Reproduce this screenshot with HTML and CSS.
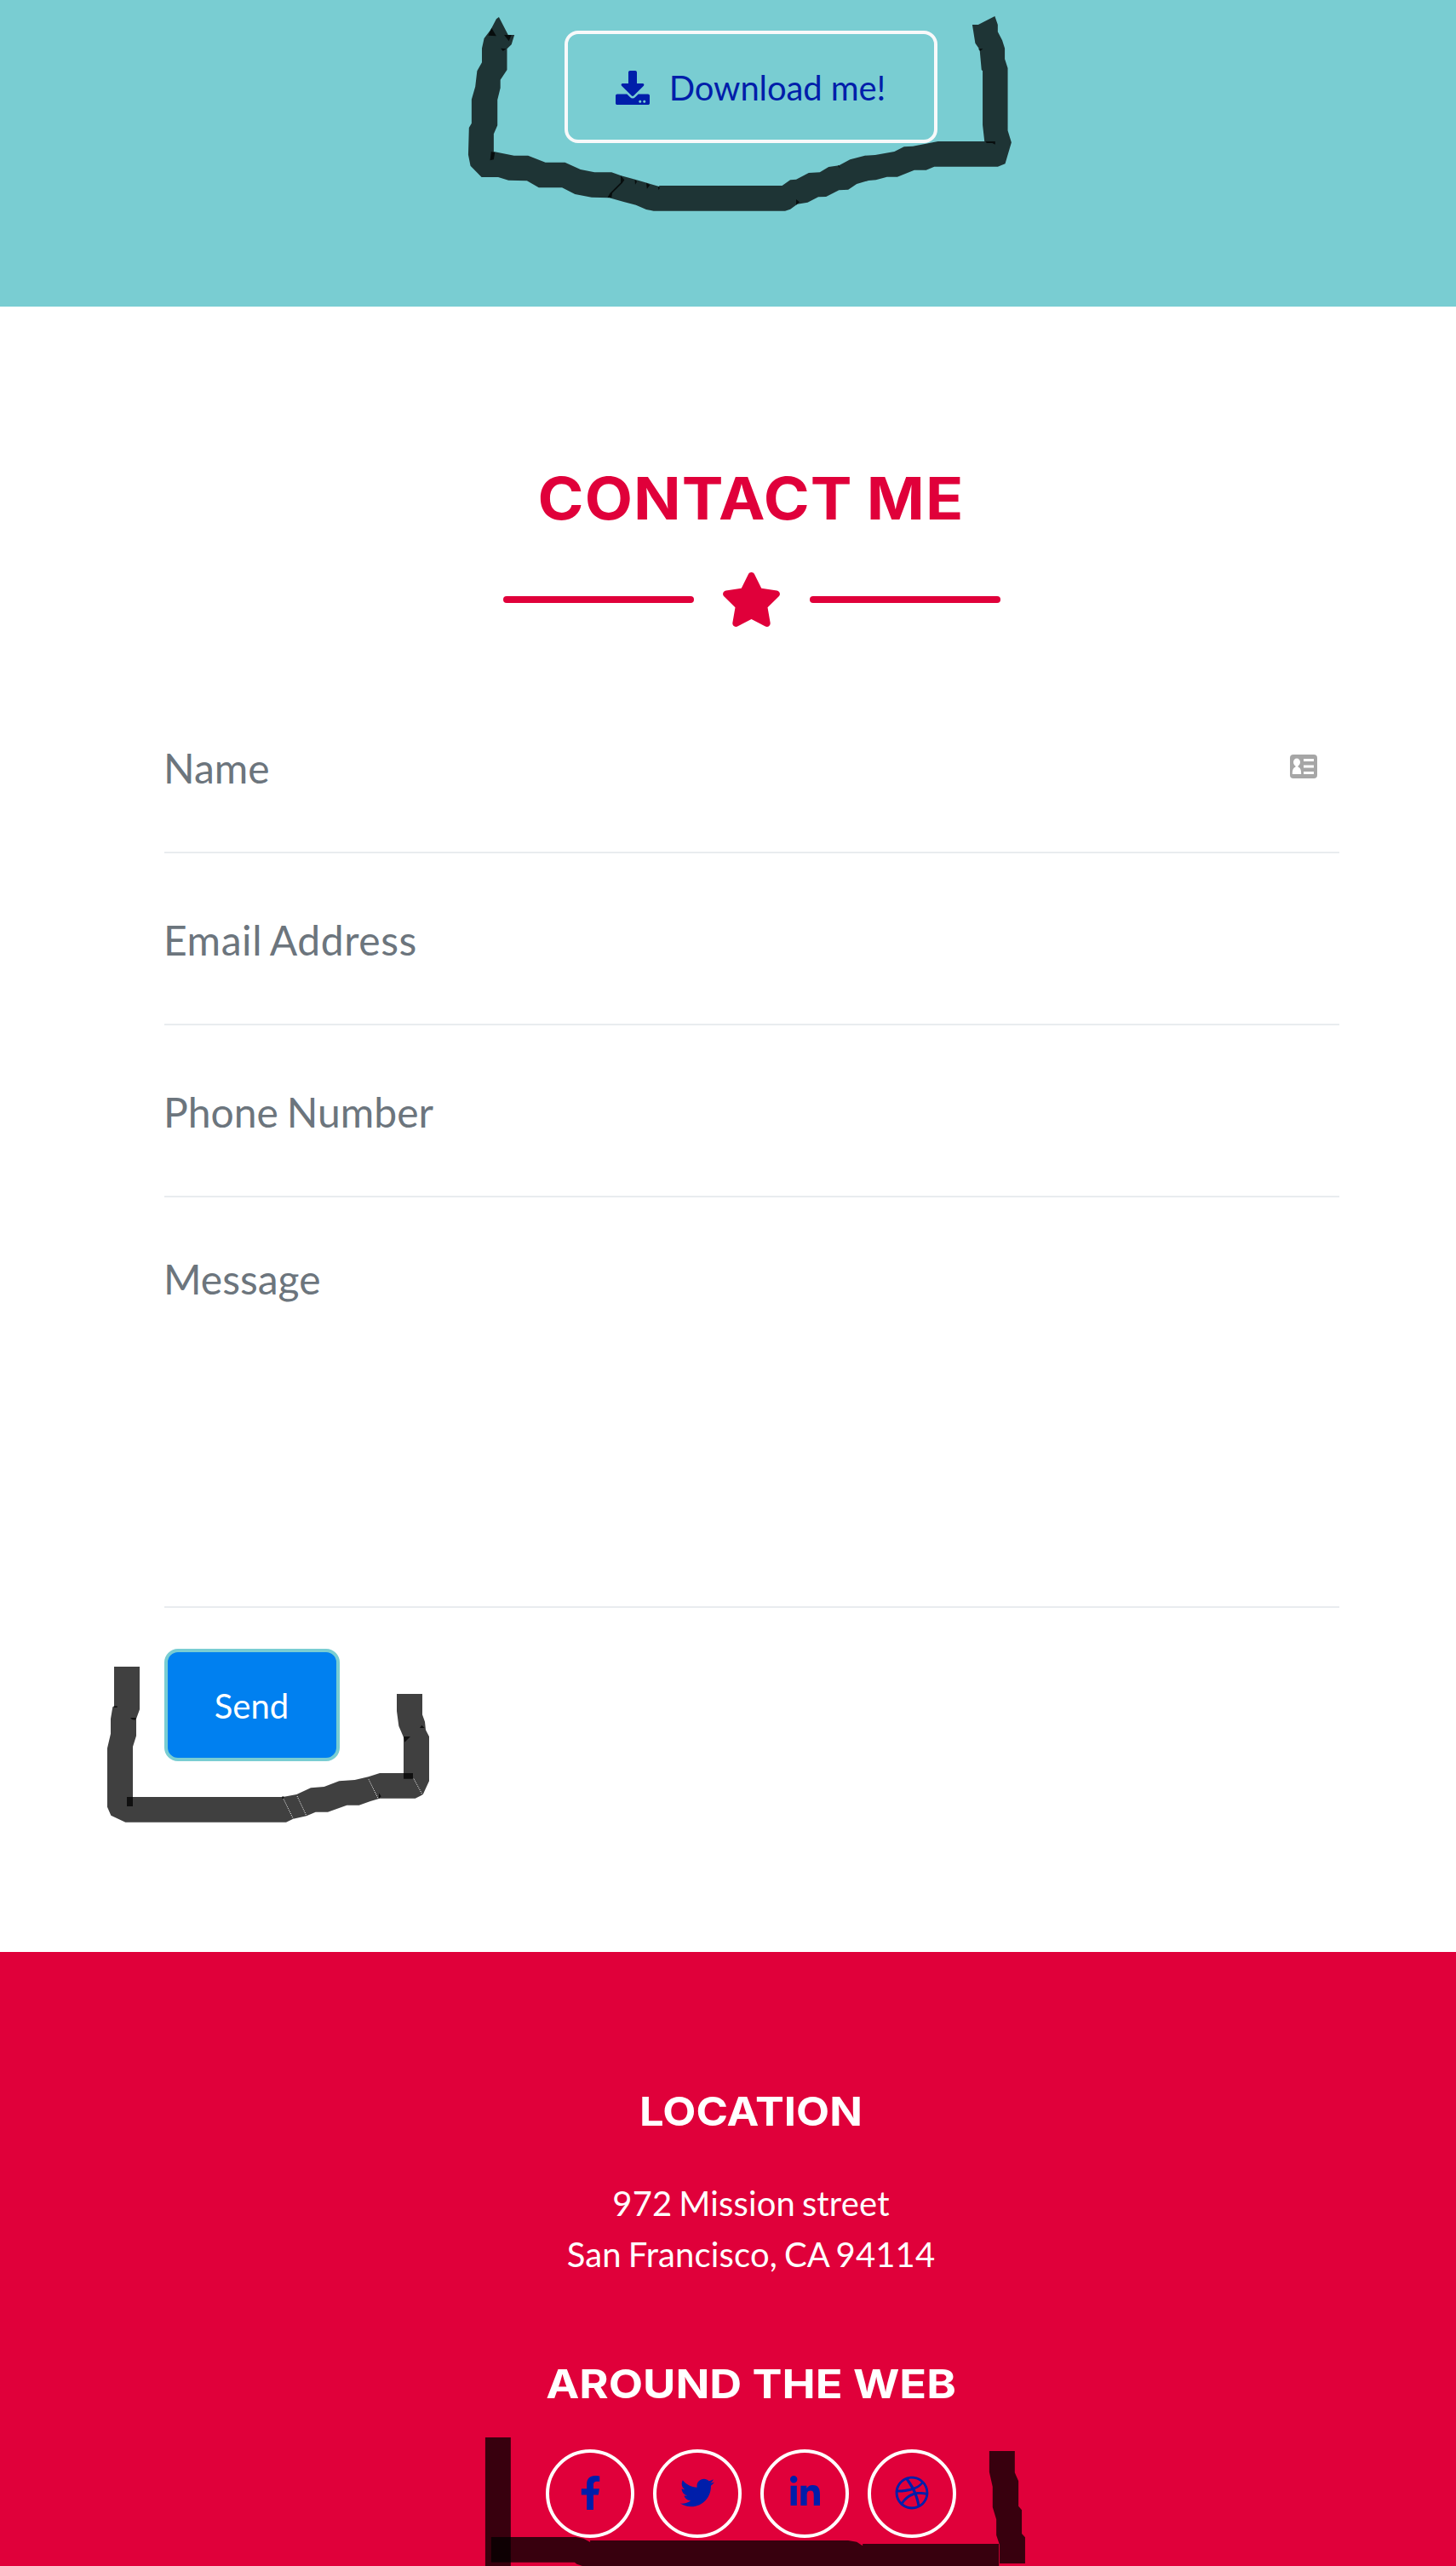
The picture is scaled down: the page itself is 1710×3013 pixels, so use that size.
FILE: index.html
```html
<!DOCTYPE html>
<html lang="en">
<head>
<meta charset="utf-8">
<title>Contact</title>
<link rel="stylesheet" href="styles.css">
</head>
<body>
<div class="page">
  <section class="about">
    <a class="btn btn-outline" href="#">
      <svg class="btn-icon" viewBox="0 0 512 512"><path fill="currentColor" d="M216 0h80c13.300 0 24 10.700 24 24v168h87.700c17.800 0 26.700 21.500 14.100 34.100L269.700 378.300c-7.500 7.500-19.800 7.500-27.300 0L90.100 226.100c-12.600-12.600-3.700-34.100 14.100-34.100H192V24c0-13.300 10.700-24 24-24zm296 376v112c0 13.300-10.700 24-24 24H24c-13.300 0-24-10.700-24-24V376c0-13.300 10.700-24 24-24h146.700l49 49c20.100 20.100 52.500 20.100 72.600 0l49-49H488c13.300 0 24 10.700 24 24zm-124 88c0-11-9-20-20-20s-20 9-20 20 9 20 20 20 20-9 20-20zm64 0c0-11-9-20-20-20s-20 9-20 20 9 20 20 20 20-9 20-20z"/></svg>
      <span>Download me!</span>
    </a>
    <svg class="marker marker-download" viewBox="0 0 1568 1140" preserveAspectRatio="none">
      <path class="stroke" d="M129 60L154 123L171 123L163 157L151 172L151 246L133 281L133 310L125 352L125 442L115 472L115 534L170 548L208 548L255 572L308 572L350 597L388 607L434 607L460 619L500 633L563 657L563 654H896L918 634L934 632L968 609L998 607L1022 588L1050 583L1080 562L1120 548L1148 546L1200 534L1226 517L1250 515L1318 498H1444L1439 440V250L1436 246L1431 175L1419 152L1411 87H1427L1472 57L1480 87V112L1492 142L1499 170V208L1507 240V460L1517 502L1500 577L1480 587H1308L1286 599H1254L1208 623H1180L1150 634L1130 636L1098 648L1075 668L1050 670L1015 693L994 694L965 713L937 719L918 737L904 743H548L528 738L500 722L467 711L428 697L380 695L335 684L300 661H237L205 637L155 635L127 624H82L52 584L46 545L48 450L55 434V350L65 305L70 250L83 220V170L89 135L107 104L122 67Z"/>
      <path class="overlap" d="M109 98L122 127L100 125ZM143 123H163L156 145ZM134 170L149 172L140 180ZM108 534L118 538L115 562L105 565ZM459 619L469 634L463 645L436 680L434 696H423L430 680L459 643ZM497 633L503 640L498 650ZM528 644L538 652L530 665ZM560 656L565 662L561 669ZM934 702L943 712L934 722ZM1049 581L1054 594L1047 584ZM1446 498H1473V509L1465 504H1450ZM1427 172L1440 172L1432 180Z"/>
    </svg>
  </section>

  <section class="contact">
    <h2 class="section-title">CONTACT ME</h2>
    <div class="divider">
      <span class="divider-line"></span>
      <svg class="divider-star" viewBox="20 0 536 512"><path fill="currentColor" d="M259.300 17.800L194 150.200 47.900 171.500c-26.200 3.800-36.700 36.100-17.700 54.600l105.700 103-25 145.500c-4.500 26.300 23.200 46 46.400 33.700L288 439.600l130.700 68.700c23.200 12.200 50.900-7.400 46.400-33.700l-25-145.500 105.700-103c19-18.500 8.500-50.800-17.700-54.600L382 150.200 316.700 17.800c-11.700-23.600-45.600-23.900-57.400 0z"/></svg>
      <span class="divider-line"></span>
    </div>
    <form class="form">
      <div class="field">Name
        <svg class="card-icon" viewBox="0 0 32 28"><rect width="32" height="28" rx="4" fill="#a6a6a6"/><g fill="#fff"><ellipse cx="8" cy="9" rx="4" ry="4.500"/><path d="M6.500 12h3v2.500c2.500 1 3.700 3 3.700 8.500H2.800c0-5.500 1.200-7.500 3.700-8.500z"/><path d="M16 5h12v3H16zM16 12.500h12v3H16zM16 20h12v3H16z"/></g></svg>
      </div>
      <div class="field field-email">Email Address</div>
      <div class="field field-phone">Phone Number</div>
      <div class="field field-message">Message</div>
      <button class="btn btn-send" type="button">Send</button>
    </form>
    <svg class="marker marker-send" viewBox="0 0 1320 900" preserveAspectRatio="none">
      <path class="stroke" d="M102 291H192V442L180 475V535L168 573V750H697L745 741L795 718L842 714L895 694L950 690L998 679L1038 666H1122V540L1105 500L1098 448V387H1188V460L1197 485L1200 514L1212 537V694L1190 742L1163 755H1038L1005 765L965 779H922L855 803H812L780 817L733 827L708 839H142L91 815L78 785V578L90 527V475L97 433L102 430Z"/>
      <path class="overlap" d="M102 430H113V435H102ZM159 471H180L176 479L165 477ZM147 750H168V783H147ZM694 748H700V757H694ZM1035 736L1043 748L1035 755ZM1122 537H1146L1126 557ZM1186 497L1196 507H1179ZM1122 666H1155V686H1122Z"/>
      <path class="gap" d="M699 757L733 827M747 747L780 817M999 688L1033 757M1158 686L1190 745"/>
    </svg>
  </section>

  <footer class="footer">
    <h4 class="footer-title footer-title-location">LOCATION</h4>
    <p class="address">972 Mission street<br>San Francisco, CA 94114</p>
    <h4 class="footer-title footer-title-web">AROUND THE WEB</h4>
    <div class="socials">
      <a class="social" href="#"><svg viewBox="0 0 320 512"><path fill="currentColor" d="M279.140 288l14.220-92.660h-88.910v-60.130c0-25.350 12.420-50.060 52.240-50.060h40.420V6.260S260.430 0 225.360 0c-73.220 0-121.080 44.380-121.080 124.720v70.620H22.890V288h81.390v224h100.170V288z"/></svg></a>
      <a class="social" href="#"><svg viewBox="0 0 512 512"><path fill="currentColor" d="M459.370 151.716c.325 4.548.325 9.097.325 13.645 0 138.720-105.583 298.558-298.558 298.558-59.452 0-114.680-17.219-161.137-47.106 8.447.974 16.568 1.299 25.340 1.299 49.055 0 94.213-16.568 130.274-44.832-46.132-.975-84.792-31.188-98.112-72.772 6.498.974 12.995 1.624 19.818 1.624 9.421 0 18.843-1.300 27.614-3.573-48.081-9.747-84.143-51.980-84.143-102.985v-1.299c13.969 7.797 30.214 12.670 47.431 13.319-28.264-18.843-46.781-51.005-46.781-87.391 0-19.492 5.197-37.360 14.294-52.954 51.655 63.675 129.300 105.258 216.365 109.807-1.624-7.797-2.599-15.918-2.599-24.040 0-57.828 46.782-104.934 104.934-104.934 30.213 0 57.502 12.670 76.670 33.137 23.715-4.548 46.456-13.320 66.599-25.340-7.798 24.366-24.366 44.833-46.132 57.827 21.117-2.273 41.584-8.122 60.426-16.243-14.292 20.791-32.161 39.308-52.628 54.253z"/></svg></a>
      <a class="social" href="#"><svg viewBox="0 0 448 512"><path fill="currentColor" d="M100.280 448H7.400V148.900h92.880zM53.790 108.100C24.090 108.100 0 83.500 0 53.800a53.790 53.790 0 0 1 107.580 0c0 29.700-24.100 54.300-53.790 54.300zM447.900 448h-92.680V302.400c0-34.700-.7-79.200-48.290-79.200-48.290 0-55.690 37.700-55.690 76.700V448h-92.780V148.900h89.080v40.800h1.300c12.400-23.500 42.690-48.300 87.880-48.300 94 0 111.280 61.900 111.280 142.300V448z"/></svg></a>
      <a class="social" href="#"><svg viewBox="0 0 512 512"><path fill="currentColor" d="M256 8C119.252 8 8 119.252 8 256s111.252 248 248 248 248-111.252 248-248S392.748 8 256 8zm163.970 114.366c29.503 36.046 47.369 81.957 47.835 131.955-6.984-1.477-77.018-15.682-147.502-6.818-5.752-14.041-11.181-26.393-18.617-41.614 78.321-31.977 113.818-77.482 118.284-83.523zM396.421 97.870c-3.810 5.427-35.697 48.286-111.021 76.519-34.712-63.776-73.185-116.168-79.040-124.008 67.176-16.193 137.966 1.270 190.061 47.489zm-230.480-33.250c5.585 7.659 43.438 60.116 78.537 122.509-99.087 26.313-186.360 25.934-195.834 25.809C62.380 147.205 106.678 92.573 165.941 64.620zM44.170 256.323c0-2.166.043-4.322.108-6.473 9.268.19 111.920 1.513 217.706-30.146 6.064 11.868 11.857 23.915 17.174 35.949-76.599 21.575-146.194 83.527-180.531 142.306C64.794 360.405 44.170 310.730 44.170 256.323zm81.807 167.113c22.127-45.233 82.178-103.622 167.579-132.756 29.740 77.283 42.039 142.053 45.189 160.638-68.112 29.013-150.015 21.053-212.768-27.882zm248.380 8.489c-2.171-12.886-13.446-74.897-41.152-151.033 66.380-10.626 124.700 6.768 131.947 9.055-9.442 58.941-43.273 109.844-90.795 141.978z"/></svg></a>
    </div>
    <svg class="marker marker-social" viewBox="0 0 1568 819" preserveAspectRatio="none">
      <path class="stroke" d="M69 366H138V717H315L335 722L353 735V729H1052L1075 734L1091 748V741H1460V819H332L317 812L311 806H138V819H69Z"/>
      <path class="stroke" d="M1434 414H1503V490L1513 520V608L1522 622V705L1531 718V810H1462V745L1453 710V655L1443 612V540L1434 488Z"/>
      <path class="overlap" d="M85 717H138V806H85Z"/>
    </svg>
  </footer>
</div>
</body>
</html>
```

FILE: styles.css
```css
* { box-sizing: border-box; }

html { overflow: hidden; }

body {
  margin: 0;
  font-family: Lato, "Liberation Sans", sans-serif;
  background: #fff;
  overflow: hidden;
}

/* The layout is wider than the window, so its centre sits right of the middle. */
.page {
  width: 1764px;
  height: 3013px;
  display: flex;
  flex-direction: column;
  overflow: hidden;
}

.about {
  position: relative;
  height: 360px;
  flex: none;
  padding-top: 36px;
  display: flex;
  justify-content: center;
  align-items: flex-start;
  background: #79cdd2;
}

.btn {
  display: flex;
  align-items: center;
  justify-content: center;
  height: 132px;
  padding: 2px 1px 0 0;
  border: 4px solid #f8f9fa;
  border-radius: 16px;
  font: 400 40px/60px Lato, sans-serif;
  text-decoration: none;
}

.btn-outline {
  width: 438px;
  gap: 23px;
  letter-spacing: -0.1px;
  color: #001eaa;
}

.btn-icon { width: 40px; height: 40px; }

.contact {
  position: relative;
  height: 1932px;
  flex: none;
  padding-top: 189px;
  background: #fff;
}

.section-title {
  margin: 0;
  font: 700 69px/72px Inter, sans-serif;
  letter-spacing: 1px;
  word-spacing: -2px;
  text-align: center;
  transform: scaleX(1.059);
  color: #e0003a;
}

.divider {
  margin-top: 43px;
  height: 80px;
  padding-left: 2px;
  display: flex;
  align-items: center;
  justify-content: center;
  gap: 34.5px;
  color: #e0003a;
}

.divider-line {
  width: 224px;
  height: 8px;
  border-radius: 4px;
  background: currentColor;
}

.divider-star {
  width: 67px;
  height: 64px;
  margin: 0 1px 0 -1px;
}

.form {
  width: 1380px;
  margin: 56px 0 0 193px;
}

.field {
  position: relative;
  height: 202px;
  border-bottom: 2px solid #e9ecef;
  padding-top: 66px;
  font-size: 48px;
  line-height: 72px;
  text-indent: -1px;
  color: #6c757d;
}

.field-email {
  letter-spacing: 0.56px;
  word-spacing: -2.5px;
}

.field-phone {
  letter-spacing: 0.03px;
  word-spacing: -2.5px;
}

.field-message {
  height: 482px;
  padding-top: 60px;
}

.card-icon {
  position: absolute;
  right: 26px;
  top: 86px;
  width: 32px;
  height: 28px;
}

.btn-send {
  width: 206px;
  margin-top: 48px;
  border-color: #79cdd2;
  color: #fff;
  background: #0080f0;
}

.footer {
  position: relative;
  flex: 1;
  padding-top: 158px;
  text-align: center;
  color: #fff;
  background: #e0003a;
}

.footer-title {
  margin: 0;
  font: 700 47px/58px Inter, sans-serif;
}

.footer-title-location { transform: scaleX(1.08); }

.footer-title-web {
  margin-top: 93px;
  transform: scaleX(1.115);
}

.address {
  margin: 49px 0 0;
  font-size: 40px;
  line-height: 60px;
  letter-spacing: 0.15px;
  word-spacing: -2.5px;
}

.socials {
  display: flex;
  justify-content: center;
  gap: 22px;
  margin-top: 48px;
}

.social {
  width: 104px;
  height: 104px;
  padding-bottom: 2px;
  border: 4px solid #fff;
  border-radius: 50%;
  display: flex;
  align-items: center;
  justify-content: center;
  color: #001eaa;
}

.social svg { height: 40px; }

/* Hand-drawn marker strokes lying over the page. */
.marker {
  position: absolute;
  pointer-events: none;
}

.marker-download { left: 530px; top: 0; width: 680px; height: 380px; }
.marker-send { left: 100px; top: 1500px; width: 440px; height: 300px; }
.marker-social { left: 540px; top: 448px; width: 680px; height: 273px; }

.stroke { fill: #000; fill-opacity: 0.75; }
.overlap { fill: #000; fill-opacity: 0.75; }
.gap { stroke: #fff; stroke-width: 3; stroke-dasharray: 3 4; fill: none; }
```
